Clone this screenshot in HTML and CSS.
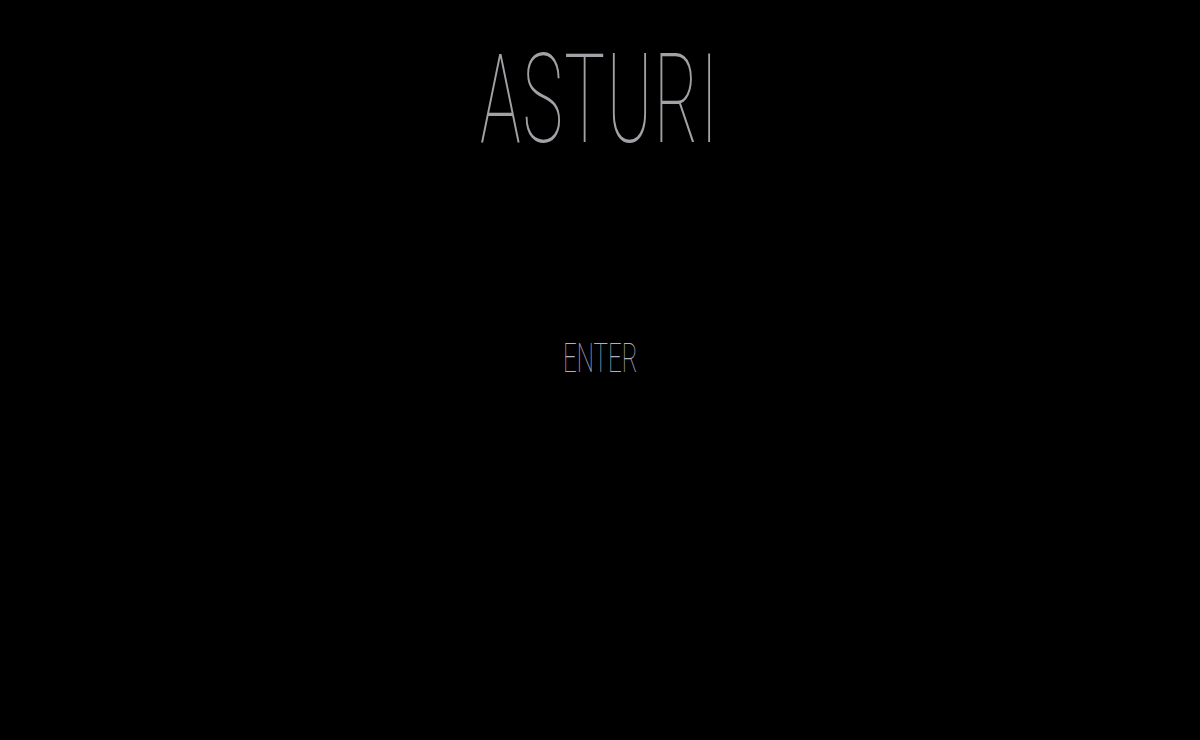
FILE: index.html
```html
<!DOCTYPE html>
<html>
<head>
<meta charset="utf-8">
<link rel="stylesheet" href="styles.css">
</head>
<body>
<main class="page">
  <h1 class="title"><span class="squeeze">ASTURI</span></h1>
  <a class="enter" href="#"><span class="squeeze">ENTER</span></a>
</main>
</body>
</html>
```
FILE: styles.css
```css
html, body {
  margin: 0;
  padding: 0;
  background: #000;
  height: 100%;
}
.page {
  display: flex;
  flex-direction: column;
  align-items: center;
  font-family: Roboto, "Liberation Sans", sans-serif;
}
.title {
  margin: 30px 0 0;
  font-weight: 100;
  font-size: 124px;
  line-height: 140px;
  color: #a2a2a6;
}
.squeeze {
  display: inline-block;
  transform: scaleX(0.55);
}
.title .squeeze {
  letter-spacing: 3px;
}
.enter {
  margin-top: 163px;
  font-weight: 100;
  font-size: 41px;
  line-height: 50px;
  color: #b0b0c4;
  text-decoration: none;
}
.enter .squeeze {
  transform: scaleX(0.59);
}
```
